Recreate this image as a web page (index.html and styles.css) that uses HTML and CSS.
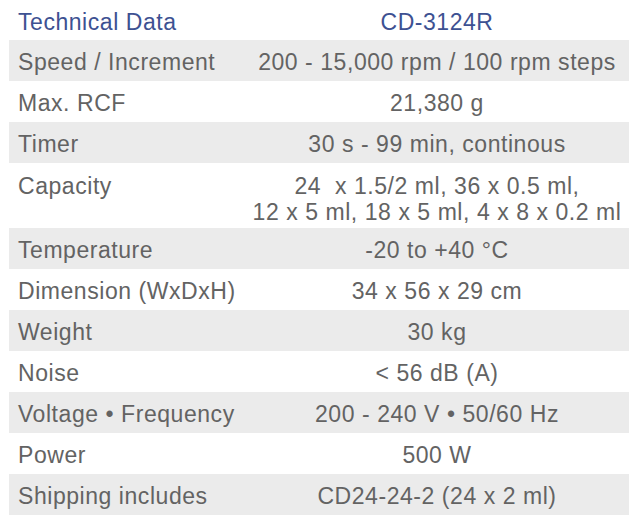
FILE: index.html
```html
<!DOCTYPE html>
<html>
<head>
<meta charset="utf-8">
<link rel="stylesheet" href="styles.css">
</head>
<body>
<table class="spec">
  <tr class="head"><td class="label">Technical Data</td><td class="value">CD-3124R</td></tr>
  <tr class="alt"><td class="label">Speed / Increment</td><td class="value">200 - 15,000 rpm / 100 rpm steps</td></tr>
  <tr><td class="label">Max. RCF</td><td class="value">21,380 g</td></tr>
  <tr class="alt"><td class="label">Timer</td><td class="value">30 s - 99 min, continous</td></tr>
  <tr class="tall"><td class="label">Capacity</td><td class="value"><div class="line pre">24  x 1.5/2 ml, 36 x 0.5 ml,</div><div class="line">12 x 5 ml, 18 x 5 ml, 4 x 8 x 0.2 ml</div></td></tr>
  <tr class="alt"><td class="label">Temperature</td><td class="value">-20 to +40 °C</td></tr>
  <tr><td class="label">Dimension (WxDxH)</td><td class="value">34 x 56 x 29 cm</td></tr>
  <tr class="alt"><td class="label">Weight</td><td class="value">30 kg</td></tr>
  <tr><td class="label">Noise</td><td class="value">&lt; 56 dB (A)</td></tr>
  <tr class="alt"><td class="label">Voltage • Frequency</td><td class="value">200 - 240 V • 50/60 Hz</td></tr>
  <tr><td class="label">Power</td><td class="value">500 W</td></tr>
  <tr class="alt"><td class="label">Shipping includes</td><td class="value">CD24-24-2 (24 x 2 ml)</td></tr>
</table>
</body>
</html>
```
FILE: styles.css
```css
html, body {
  margin: 0;
  padding: 0;
  background: #ffffff;
}
body {
  font-family: "Liberation Sans", Arial, sans-serif;
  font-size: 23px;
  letter-spacing: 0.55px;
  color: #636363;
}
.spec {
  border-collapse: collapse;
  width: 620px;
  margin-left: 9px;
  table-layout: fixed;
}
.spec td {
  padding: 3px 0 0 0;
  height: 38px;
  line-height: 38px;
  vertical-align: top;
  white-space: nowrap;
}
.spec .label {
  width: 236px;
  padding-left: 9px;
  box-sizing: border-box;
}
.spec .value {
  text-align: center;
}
.head td {
  height: 36px;
  line-height: 36px;
  padding-top: 4px;
  color: #3d5192;
}
.alt td {
  background: #ebebeb;
}
.tall td {
  height: 55px;
  line-height: 26px;
  padding-top: 10px;
}
.line {
  height: 26px;
  line-height: 26px;
}
.pre {
  white-space: pre;
}
```
